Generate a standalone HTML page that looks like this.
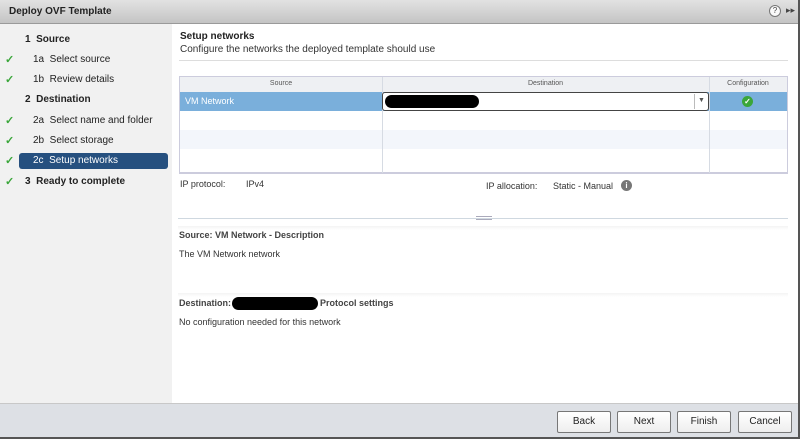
<!DOCTYPE html>
<html><head><style>
*{margin:0;padding:0;box-sizing:border-box}
body{width:800px;height:439px;overflow:hidden;font-family:"Liberation Sans",sans-serif;font-size:9px;color:#333;background:#fff;position:relative}
.abs{position:absolute}
#title{left:0;top:0;width:800px;height:24px;background:linear-gradient(#e2e2e2,#c4c4c4);border-bottom:1px solid #9a9a9a;font-weight:bold;font-size:10px;color:#222;padding:6px 0 0 9px}
#left{left:0;top:24px;width:172px;height:379px;background:#f1f1f1}
.st{position:absolute;font-size:10px;color:#222}
.ck{position:absolute;left:5px;color:#3aa63a;font-size:11px;font-weight:bold}
#sel{left:19px;top:153px;width:149px;height:16px;background:#26507f;border-radius:3px}
#bottom{left:0;top:403px;width:800px;height:36px;background:#dde0e5;border-top:1px solid #c8c8c8}
.btn{position:absolute;top:411px;height:22px;border:1px solid #777;border-radius:2px;background:linear-gradient(#fff,#eee);font-size:10px;text-align:center;line-height:20px;color:#222}
</style></head><body>
<div id="title" class="abs">Deploy OVF Template</div>
<div class="abs" style="left:769px;top:5px;width:12px;height:12px;border:1px solid #777;border-radius:50%;background:#fafafa;font-size:8px;text-align:center;line-height:10px;color:#444">?</div>
<div class="abs" style="left:786px;top:5px;font-size:9px;color:#444">▸▸</div>
<div id="left" class="abs"></div>
<div id="sel" class="abs"></div>
<div class="st" style="left:25px;top:34px;font-weight:bold">1&nbsp; Source</div>
<div class="ck" style="top:53px">✓</div><div class="st" style="left:33px;top:54px">1a&nbsp; Select source</div>
<div class="ck" style="top:73px">✓</div><div class="st" style="left:33px;top:74px">1b&nbsp; Review details</div>
<div class="st" style="left:25px;top:94px;font-weight:bold">2&nbsp; Destination</div>
<div class="ck" style="top:114px">✓</div><div class="st" style="left:33px;top:115px">2a&nbsp; Select name and folder</div>
<div class="ck" style="top:134px">✓</div><div class="st" style="left:33px;top:135px">2b&nbsp; Select storage</div>
<div class="ck" style="top:154px">✓</div><div class="st" style="left:33px;top:155px;color:#fff">2c&nbsp; Setup networks</div>
<div class="ck" style="top:175px">✓</div><div class="st" style="left:25px;top:176px;font-weight:bold">3&nbsp; Ready to complete</div>

<div class="abs" style="left:180px;top:31px;font-weight:bold;font-size:10px;color:#222">Setup networks</div>
<div class="abs" style="left:180px;top:44px;font-size:10px;color:#333">Configure the networks the deployed template should use</div>
<div class="abs" style="left:179px;top:60px;width:609px;height:1px;background:#ddd"></div>

<div class="abs" style="left:179px;top:76px;width:609px;height:98px;border:1px solid #ccd;border-bottom:2px solid #ccd"></div>
<div class="abs" style="left:180px;top:77px;width:607px;height:15px;background:#eef0f3"></div>
<div class="abs" style="left:180px;top:92px;width:607px;height:19px;background:#7aafdb"></div>
<div class="abs" style="left:180px;top:130px;width:607px;height:19px;background:#f3f6fb"></div>
<div class="abs" style="left:382px;top:77px;width:1px;height:96px;background:#d6dbe3"></div>
<div class="abs" style="left:709px;top:77px;width:1px;height:96px;background:#d6dbe3"></div>
<div class="abs" style="left:180px;top:80px;width:202px;text-align:center;font-size:7px;color:#555">Source</div>
<div class="abs" style="left:382px;top:80px;width:327px;text-align:center;font-size:7px;color:#555">Destination</div>
<div class="abs" style="left:709px;top:80px;width:78px;text-align:center;font-size:7px;color:#555">Configuration</div>
<div class="abs" style="left:185px;top:96px;color:#fff;font-size:9px">VM Network</div>
<div class="abs" style="left:382px;top:92px;width:327px;height:19px;background:#fff;border:1px solid #444;border-radius:3px"></div>
<div class="abs" style="left:385px;top:95px;width:94px;height:13px;background:#000;border-radius:7px"></div>
<div class="abs" style="left:694px;top:94px;width:1px;height:15px;background:#bbb"></div>
<div class="abs" style="left:698px;top:97px;font-size:7px;color:#555">▼</div>
<div class="abs" style="left:742px;top:96px;width:11px;height:11px;border-radius:50%;background:#3aa63a;color:#fff;font-size:8px;text-align:center;line-height:11px;font-weight:bold">✓</div>

<div class="abs" style="left:180px;top:179px;font-size:9px">IP protocol:</div>
<div class="abs" style="left:246px;top:179px;font-size:9px">IPv4</div>
<div class="abs" style="left:486px;top:181px;font-size:9px">IP allocation:</div>
<div class="abs" style="left:553px;top:181px;font-size:9px">Static - Manual</div>
<div class="abs" style="left:621px;top:180px;width:11px;height:11px;border-radius:50%;background:#777;color:#fff;font-size:8px;text-align:center;line-height:11px;font-weight:bold">i</div>

<div class="abs" style="left:178px;top:218px;width:610px;height:1px;background:#cfd8e0"></div>
<div class="abs" style="left:476px;top:216px;width:16px;height:4px;border-top:1px solid #aab;border-bottom:1px solid #aab"></div>
<div class="abs" style="left:178px;top:226px;width:610px;height:4px;background:linear-gradient(#f4f4f4,#fff)"></div>
<div class="abs" style="left:179px;top:230px;font-weight:bold;font-size:9px;color:#444">Source: VM Network - Description</div>
<div class="abs" style="left:179px;top:249px;font-size:9px;color:#333">The VM Network network</div>
<div class="abs" style="left:178px;top:293px;width:610px;height:4px;background:linear-gradient(#f4f4f4,#fff)"></div>
<div class="abs" style="left:179px;top:298px;font-weight:bold;font-size:9px;color:#444">Destination:</div>
<div class="abs" style="left:232px;top:297px;width:86px;height:13px;background:#000;border-radius:7px"></div>
<div class="abs" style="left:320px;top:298px;font-weight:bold;font-size:9px;color:#444">Protocol settings</div>
<div class="abs" style="left:179px;top:317px;font-size:9px;color:#333">No configuration needed for this network</div>

<div id="bottom" class="abs"></div>
<div class="btn" style="left:557px;width:54px">Back</div>
<div class="btn" style="left:617px;width:54px">Next</div>
<div class="btn" style="left:677px;width:54px">Finish</div>
<div class="btn" style="left:738px;width:54px">Cancel</div>
<div class="abs" style="left:798px;top:0;width:2px;height:439px;background:#555"></div>
<div class="abs" style="left:0;top:437px;width:800px;height:2px;background:#555"></div>
</body></html>
